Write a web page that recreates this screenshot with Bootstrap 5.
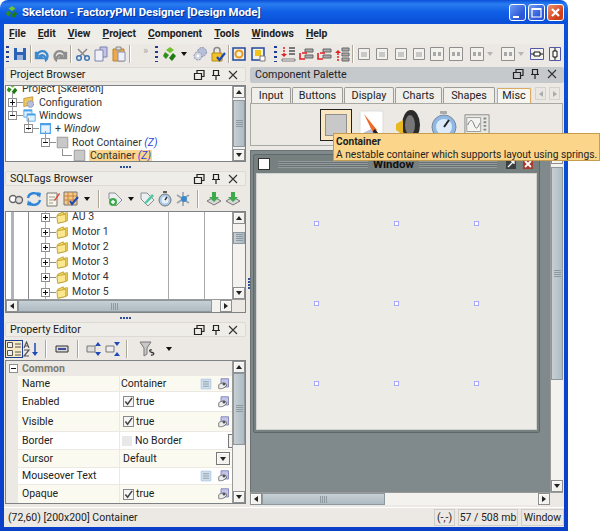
<!DOCTYPE html>
<html lang="en">
<head>
<meta charset="UTF-8">
<title>Skeleton - FactoryPMI Designer [Design Mode]</title>
<link href="https://cdn.jsdelivr.net/npm/bootstrap@5.3.0/dist/css/bootstrap.min.css" rel="stylesheet">
<style>
html,body{margin:0;height:531px;overflow:hidden;background:#fff}
body,.win{font:10.5px/1.1 Roboto,"Liberation Sans",Arial,sans-serif;color:#222}
.win{position:relative;width:568px;height:531px;padding:0 4px 4px;border-radius:8px 8px 0 0;background:linear-gradient(#0a4fd8 0,#2a7cf0 4px,#0f5fe6 12px,#0a50d8 22px,#0a3fc8 100%)}
.title{height:24px;color:#fff;font-weight:700;font-size:11.4px;text-shadow:1px 1px 0 #0a2f90}
.title .logo{margin:0 3px 0 1px;flex:none}
.wb{width:17px;height:17px;margin-left:2px;border:1px solid #fff;border-radius:3px;background:linear-gradient(135deg,#6f9cf4,#2a58d8 70%)}
.wb svg{display:block}
.wb.x{background:linear-gradient(135deg,#ee9070,#d2401a 70%)}
.inner{height:503px;background:#ece9e4}
.menu{height:20px;gap:12px;padding-left:5px;font-weight:700;font-size:10.4px;background:#efede8}
.tb{height:20px}
.ti{width:18px;height:16px;flex:none}
.grip{width:3px;height:16px;flex:none;background:repeating-linear-gradient(#1c3f94 0 2px,transparent 2px 5px)}
.sep{width:2px;height:18px;flex:none;border-left:1px solid #aca899;border-right:1px solid #fff}
.car{width:8px;flex:none;height:8px;display:flex;align-items:center;justify-content:center}
.car::after{content:"";border:3px solid transparent;border-top:4px solid #111;border-bottom:0}
.car.off::after{border-top-color:#b5b5b5}
.l1{margin-left:1px}.l2{margin-left:2px}.l3{margin-left:3px}.l4{margin-left:4px}.l5{margin-left:5px}.l6{margin-left:6px}.l7{margin-left:7px}.l9{margin-left:9px}.l10{margin-left:10px}
.more{width:18px;color:#aaa;font-size:11px;text-align:center;line-height:10px;margin-top:-6px}
.main{height:443px}
.left{width:243px;padding:3px 1px 0;flex:none}
.split{width:3px;background:#ece9e4}
.split-v{height:9px}
.dots{width:12px;height:2px;background:repeating-linear-gradient(90deg,#2a4f9c 0 2px,transparent 2px 3px)}
.dots-v{width:2px;height:12px;background:repeating-linear-gradient(#2a4f9c 0 2px,transparent 2px 3px);margin:214px 0 0 .5px}
.ph{height:15px;padding-left:4px;font-size:10.7px;border:1px solid #dcdad4;background:#efede8;border-radius:2px}
.ph svg{width:12px;height:12px;flex:none}
.ph .ctl{position:absolute;right:6px;top:1px;gap:5px}
.ph-a{background:#c5c9cc;height:16px;border:0;color:#222;padding-left:5px}
.sbox{border:1px solid #7f8284;background:#fff;overflow:hidden}
.tr{height:13.33px;white-space:nowrap;font-size:10.5px;color:#333}
.tr15{height:15px}
.tr .tg{width:15px;flex:none;position:relative;height:9px}
.tg::before{content:"";position:absolute;left:0;top:0;width:9px;height:9px;border:1px solid #8f8f8f;background:#fff}
.tg::after{content:"";position:absolute;left:9px;top:4px;width:6px;height:1px;background:#8f8f8f}
.tg i{position:absolute;left:2px;top:4px;width:5px;height:1px;background:#111;z-index:1}
.tg.p b{position:absolute;left:4px;top:2px;width:1px;height:5px;background:#111;z-index:1}
.ell{width:15px;height:13px;flex:none;position:relative}
.ell::after{content:"";position:absolute;left:4px;top:0;width:10px;height:7px;border-left:1px solid #8f8f8f;border-bottom:1px solid #8f8f8f}
.tr svg{width:13px;height:13px;flex:none}
.tr span{margin-left:3px}
.lv0{padding-left:0}.lv1{padding-left:2px}.lv2{padding-left:18px}.lv3{padding-left:35px}.lv4{padding-left:52px}
.z{color:#2b3fe0}
.hl{background:#fbd58c;padding:0 1px}
.pt{margin-top:-3.7px}
.tags{margin-top:-2.5px}
.vline{position:absolute;width:1px;background:#9a9a9a}
.pv1{left:6px;top:7px;height:22px}.pv2{left:22px;top:32px;height:12px}.pv3{left:39px;top:45px;height:12px}
.sv1{left:5px;top:0;bottom:0;width:3px;background:#aeb4b8}.sv2{left:22px;top:0;bottom:0;background:#888}
.sv3{left:39px;top:0;bottom:0;background:#aaa}.sv4{left:162px;top:0;bottom:0;background:#aaa}.sv5{left:198px;top:0;bottom:0;background:#aaa}
.vsb{width:13px;flex:none;background:#f3f2ee;border-left:1px solid #9a9a9a}
.sbtn{height:12px;flex:none;background:#f3f2ee;border:1px solid #8c8f90;box-shadow:inset 1px 1px 0 #fff;display:flex;align-items:center;justify-content:center}
.u::after{content:"";border:3px solid transparent;border-bottom:4px solid #222;border-top:0}
.d::after{content:"";border:3px solid transparent;border-top:4px solid #222;border-bottom:0}
.lf::after{content:"";border:3px solid transparent;border-right:4px solid #222;border-left:0}
.rt::after{content:"";border:3px solid transparent;border-left:4px solid #222;border-right:0}
.thumb{background:linear-gradient(90deg,#c6d0d5,#aebbc2);border:1px solid #8c989e;display:flex;align-items:center;justify-content:center}
.thumb::after{content:"";width:7px;height:8px;background:repeating-linear-gradient(#8e9aa0 0 1px,transparent 1px 2px)}
.thumb.h{background:linear-gradient(#c6d0d5,#aebbc2)}
.thumb.h::after{height:7px;width:8px;background:repeating-linear-gradient(90deg,#8e9aa0 0 1px,transparent 1px 2px)}
.hsb{height:13px;flex:none;background:#f3f2ee;border-top:1px solid #9a9a9a}
.hsb .sbtn{width:12px;height:12px}
.corner{width:13px;background:#ece9e4;flex:none}
.vt1{height:50px;margin:2px 0}
.vt1+.sbtn{margin-top:auto}
.vt2{height:12px;margin-top:8px}
.vt3{height:72px}
.vt4{height:213px;margin-top:3px}
.vt-btn{height:14px}
.ht1{width:194px}
.ht2{width:123px}
#projectTree{height:77px;margin-top:3px}
#tagTree{height:102px}
#props{height:144px}
.stb{height:25px;padding-left:2px}
.stb2{height:23px;padding-left:0}
.sel{width:18px;height:18px;border:1px solid #1c3f94;background:#f6e9c4;flex:none}
.sel svg{width:16px;height:16px;display:block}
.ti16{width:16px}
.prop{font-size:10.5px;background:#ece9e4}
.cmn{height:15px;color:#807c70;font-weight:700;padding-left:3px;gap:4px}
.cmn .tg{width:9px;height:9px;position:relative}
.cmn .tg::after{display:none}
.pr{padding-left:12px;margin-bottom:1px}
.pr>div:first-child{width:101px;padding-left:4px;margin-right:1px;flex:none}
.pr>div:last-child{flex-grow:1;padding-left:1px;position:relative}
.pr>div{background:#fff;height:100%}
.pr.c>div{background:#fbfaf1}
.h15{height:15px}.h19{height:19px}.h17{height:17px}.h16{height:16px}.h18{height:18px}
.pr svg.pi{position:absolute;width:12px;height:12px;top:50%;margin-top:-6px}
.pi1{right:20px}.pi2{right:2px}
.chk{width:11px;height:11px;border:1px solid #8a8a8a;background:#f5f5f5;margin:0 2px 0 2px;flex:none}
.chk svg{display:block;width:9px;height:9px}
.swatch{width:10px;height:10px;background:#e8e8e8;margin:0 3px 0 1px}
.pr>div.dft{padding-left:3px}
.combo{position:absolute;right:2px;top:2px;width:14px;height:13px;background:#f3f2ee;border:1px solid #777;box-shadow:inset 1px 1px 0 #fff;display:flex;align-items:center;justify-content:center}
.stub{position:absolute;right:0;top:2px;width:4px;height:14px;border:1px solid #777;border-right:0;background:#f3f2ee}
.right{width:314px;flex:none;padding-top:3px}
.tabs{height:20px;padding:4px 0 0 1px;margin-top:0;border:0;flex-wrap:nowrap;gap:1px}
.tabs .nav-link{height:17px;padding:0;text-align:center;font-size:10.8px;line-height:15px;color:#222;background:#f1efea;border:1px solid #9c9c98;border-bottom:0;border-radius:2px 2px 0 0;margin:0}
.tabs .nav-link.active{background:#f7f5f0;box-shadow:inset 0 0 0 1px #d9ab5e;color:#222}
.w40{width:40px}.w51{width:51px}.w50{width:50px}.w47{width:47px}.w52{width:52px}.w36{width:36px}
.tabnav{margin-left:2px;width:28px;height:15px;gap:3px}
.tabnav .dim{width:11px;height:13px;background:#e9e7e2;border:1px solid #d4d2cc;display:flex;align-items:center;justify-content:center}
.dim.lf::after{border-right-color:#aaa}.dim.rt::after{border-left-color:#aaa}
.palette{height:43px;border:1px solid #a9a9a4;background:#ece9e4;margin-right:1px}
.pal-sel{width:32px;height:32px;margin-left:69px;border:1px solid #222;background:#fbe7bf;padding:4px}
.pal-sel div{height:100%;background:#c8c8c8;border:1px solid #8f8f8f}
.pal{width:26px;height:32px;flex:none}
.work{height:355px;margin-top:4px;margin-right:1px}
.desk{background:#808a8c;border:1px solid #6a7274;border-width:1px 0 0 1px;padding:3px 0 0 2px;overflow:hidden}
.frame{width:287px;height:279px;background:#76807f;border:1px solid #5f6868;border-radius:2px;padding:0 2px}
.ftitle{height:18px;font-weight:700;font-size:11.5px;color:#111;padding:0 4px 0 2px}
.fico{width:12px;height:12px;background:#fff;border:1px solid #333;flex:none}
.strp{height:7px;flex:none;background:repeating-linear-gradient(#929a9c 0 1px,#6a7274 1px 2px)}
.strp.sl{width:90px}
.strp.sr{width:78px;margin-right:5px}
.fbtn{width:10px;height:10px;flex:none}
.canvas{height:257px;background:#ecebe6;border:1px solid #cfd2d0;padding-top:9px;display:grid;grid-template-columns:repeat(3,80px);grid-template-rows:repeat(3,80px);place-items:center;justify-content:center}
.hd{width:5px;height:5px;background:#fff;border:1px solid #a8a8ff}
.status{height:20px;padding-left:4px;font-size:10.5px;border-top:1px solid #fff;background:#ece9e4;white-space:nowrap}
.sc{height:17px;border:1px solid #cfcdc7;padding:0 1px;margin-left:3px;justify-content:center}
.s1{width:21px}.s2{width:60px}.s3{width:43px}
.tip{position:absolute;left:333px;top:133px;width:267px;height:28px;background:#fbd58a;border:1px solid #c69c4f;padding:1px 2px;white-space:nowrap;font-size:10.2px;line-height:13px;z-index:5;color:#222}
</style>
</head>
<body>
<svg width="0" height="0" class="position-absolute">
<defs>
<symbol id="cubes" viewBox="0 0 16 16"><path d="M8 1l4 3-4 3-4-3z" fill="#6cc32c"/><path d="M3 6l4 3-3 4-3-3z" fill="#2f8f1a"/><path d="M11 7l3 3-4 5-3-3z" fill="#1f7a14"/></symbol>
<symbol id="save" viewBox="0 0 16 16"><path d="M2 2h12v12H2z" fill="#2a63b8"/><path d="M5 2h6v4H5z" fill="#dfe7f2"/><path d="M5 9h6v5H5z" fill="#9bb8dc"/></symbol>
<symbol id="undo" viewBox="0 0 16 16"><path d="M3 11c0-6 7-8 10-3 1 2 0 5-1 6-1-4-3-6-6-4l2 2H2V6l1 2" fill="none" stroke="#3c88cf" stroke-width="2.4"/></symbol>
<symbol id="redo" viewBox="0 0 16 16"><path d="M13 11c0-6-7-8-10-3-1 2 0 5 1 6 1-4 3-6 6-4l-2 2h6V6l-1 2" fill="none" stroke="#8d8d8d" stroke-width="2.4"/></symbol>
<symbol id="cut" viewBox="0 0 16 16"><path d="M3 3l8 8M12 3L5 10" stroke="#8c8c8c" stroke-width="1.6"/><circle cx="4" cy="12" r="2.3" fill="none" stroke="#3b76b8" stroke-width="1.5"/><circle cx="12" cy="12" r="2.3" fill="none" stroke="#3b76b8" stroke-width="1.5"/></symbol>
<symbol id="copy" viewBox="0 0 16 16"><path d="M7 1h7v10H7z" fill="#c2c4e8" stroke="#7c7fae"/><path d="M2 4h8v11H2z" fill="#f0f1f8" stroke="#7c86ae"/></symbol>
<symbol id="paste" viewBox="0 0 16 16"><path d="M2 3h11v12H2z" fill="#eea94e" stroke="#b8812f"/><path d="M5 1h5v3H5z" fill="#ddd" stroke="#888"/><path d="M7 6h7v9H7z" fill="#eef0f8" stroke="#8a90b0"/></symbol>
<symbol id="gears" viewBox="0 0 16 16"><circle cx="10" cy="6" r="4.5" fill="#b8bfd8" stroke="#8a90ac" stroke-dasharray="2 1"/><circle cx="6" cy="10" r="4" fill="#cfd3e2" stroke="#8a90ac" stroke-dasharray="2 1"/><circle cx="6" cy="10" r="1.4" fill="#fff"/></symbol>
<symbol id="lock" viewBox="0 0 16 16"><path d="M4 7V4.500a3 3 0 0 1 6 0V7" fill="none" stroke="#888" stroke-width="1.5"/><path d="M2 7h10v8H2z" fill="#f2c22e" stroke="#b98d12"/><path d="M7 11l2.500 3L15 7" fill="none" stroke="#1f48b8" stroke-width="2.200"/></symbol>
<symbol id="fr1" viewBox="0 0 16 16"><path d="M2 2h12v12H2z" fill="#f3f0e4" stroke="#23489c" stroke-width="1.500"/><circle cx="8" cy="8" r="3.500" fill="none" stroke="#e89a1c" stroke-width="2"/></symbol>
<symbol id="fr2" viewBox="0 0 16 16"><path d="M2 2h12v12H2z" fill="#f3f0e4" stroke="#23489c" stroke-width="1.500"/><path d="M5 4h6v6H5z" fill="#f0c419"/><path d="M10 10h5v5h-5z" fill="#fff" stroke="#777"/></symbol>
<symbol id="a1" viewBox="0 0 16 16"><path d="M9 2h6M9 5h6M9 8h6" stroke="#777" stroke-width="2"/><path d="M4 1v9" stroke="#e02020" stroke-width="1.500" stroke-dasharray="2 1"/><path d="M1 8h6l-3 3z" fill="#e02020"/><path d="M2 13h13v2H2z" fill="#fff" stroke="#777"/></symbol>
<symbol id="a2" viewBox="0 0 16 16"><path d="M7 3h8v3H7zM7 9h8v3H7z" fill="#aaa" stroke="#666"/><path d="M2 7v6h5M9 7H4" fill="none" stroke="#e02020" stroke-width="1.600"/></symbol>
<symbol id="a4" viewBox="0 0 16 16"><path d="M8 2h7v3H8zM8 7h7v3H8zM8 12h7v3H8z" fill="#aaa" stroke="#666"/><path d="M4 15V6" stroke="#e02020" stroke-width="1.500" stroke-dasharray="2 1"/><path d="M1 7l3-3 3 3z" fill="#e02020"/></symbol>
<symbol id="b" viewBox="0 0 16 16"><path d="M2.500 2.500h11v11h-11z" fill="#f2f1ec" stroke="#8f8f8f"/><path d="M5 6h6v5H5z" fill="#c8c8c8"/></symbol>
<symbol id="b2" viewBox="0 0 16 16"><path d="M1.500 1.500h13v13h-13z" fill="#f2f1ec" stroke="#8f8f8f"/><path d="M4 6h3v4H4zM9 6h3v4H9z" fill="#a8a8a8"/></symbol>
<symbol id="h1" viewBox="0 0 16 16"><path d="M1.500 2.500h13v11h-13z" fill="#f2f1ec" stroke="#5458a8"/><path d="M2 8h12" stroke="#111"/><path d="M5 6h6v4H5z" fill="#fff" stroke="#111"/></symbol>
<symbol id="h2" viewBox="0 0 16 16"><path d="M2.500 1.500h11v13h-11z" fill="#f2f1ec" stroke="#5458a8"/><path d="M8 2v12" stroke="#111"/><path d="M6 5h4v6H6z" fill="#fff" stroke="#111"/></symbol>
<symbol id="cfg" viewBox="0 0 16 16"><path d="M1 3l11-2v9L1 13z" fill="#f0c860" stroke="#b88f30"/><circle cx="9" cy="10" r="4" fill="#b8bfd8" stroke="#777fa0" stroke-dasharray="2 1"/></symbol>
<symbol id="wins" viewBox="0 0 16 16"><path d="M1 1h10v9H1z" fill="#dff0ff" stroke="#4aa0e8"/><path d="M1 1h10v2H1z" fill="#4aa0e8"/><path d="M5 6h10v9H5z" fill="#dff0ff" stroke="#4aa0e8"/><path d="M5 6h10v2H5z" fill="#4aa0e8"/></symbol>
<symbol id="win" viewBox="0 0 16 16"><path d="M2 2h12v12H2z" fill="#e6f2ff" stroke="#4aa0e8" stroke-width="1.400"/><path d="M2 2h12v2H2z" fill="#4aa0e8"/></symbol>
<symbol id="cont" viewBox="0 0 16 16"><path d="M1.500 1.500h13v13h-13z" fill="#c8c8c8" stroke="#8f8f8f"/></symbol>
<symbol id="folder" viewBox="0 0 16 16"><path d="M2 4l7-3v2l5-1v10l-11 3z" fill="#f6d864" stroke="#b59a2c"/><path d="M1 6l11-2v9L2 15z" fill="#fbe78e" stroke="#b59a2c"/></symbol>
<symbol id="eye" viewBox="0 0 16 16"><circle cx="5" cy="8" r="3.500" fill="#fff" stroke="#666" stroke-width="1.400"/><circle cx="11" cy="9" r="3.500" fill="#ddd" stroke="#666" stroke-width="1.400"/></symbol>
<symbol id="ref" viewBox="0 0 16 16"><path d="M2 7a6 6 0 0 1 11-2M14 9a6 6 0 0 1-11 2" fill="none" stroke="#2f86d8" stroke-width="2.400"/><path d="M11 1l4 1-1 5zM5 15l-4-1 1-5z" fill="#2f86d8"/></symbol>
<symbol id="note" viewBox="0 0 16 16"><path d="M2 2h10v13H2z" fill="#f6f6e8" stroke="#777"/><path d="M4 6h6M4 9h6M4 12h4" stroke="#999"/><path d="M9 9l5-7 1 1-5 7z" fill="#e04a30"/></symbol>
<symbol id="tbl" viewBox="0 0 16 16"><path d="M1 1h13v13H1z" fill="#f2c98a" stroke="#777"/><path d="M1 5h13M1 9h13M5 1v13M10 1v13" stroke="#c8823a"/><path d="M7 10l2 3 6-7" fill="none" stroke="#1f48b8" stroke-width="2"/></symbol>
<symbol id="tag" viewBox="0 0 16 16"><path d="M2 2h6l7 7-6 6-7-7z" fill="#eceff2" stroke="#8a8f96"/><circle cx="6" cy="11" r="4" fill="#3faa4c"/><path d="M4 11h4M6 9v4" stroke="#fff" stroke-width="1.400"/></symbol>
<symbol id="tag2" viewBox="0 0 16 16"><path d="M2 2h6l7 7-6 6-7-7z" fill="#eceff2" stroke="#8a8f96"/><path d="M5 12l8-9 2 2-8 8z" fill="#52c8a0"/></symbol>
<symbol id="clock" viewBox="0 0 16 16"><circle cx="8" cy="9" r="6" fill="#a8c8e8" stroke="#777"/><circle cx="8" cy="9" r="3.500" fill="#e8f0f8"/><path d="M8 9l2-3M6 1h4" stroke="#333" stroke-width="1.400"/></symbol>
<symbol id="star" viewBox="0 0 16 16"><path d="M8 1v14M2 4l12 8M14 4L2 12" stroke="#9aa2aa" stroke-width="1.600"/><circle cx="9" cy="8" r="3" fill="#3c88cf"/></symbol>
<symbol id="dl" viewBox="0 0 16 16"><path d="M1 10l7-4 7 4-7 4z" fill="#d8d8d8" stroke="#777"/><path d="M6 1h4v5h3l-5 5-5-5h3z" fill="#3faa4c"/></symbol>
<symbol id="cat" viewBox="0 0 16 16"><path d="M1.500 1.500h5v5h-5zM1.500 9.500h5v5h-5zM9 3h6M9 6h6M9 11h6M9 14h6" fill="#eee" stroke="#555"/></symbol>
<symbol id="az" viewBox="0 0 16 16"><path d="M12 2v11" stroke="#1f48b8" stroke-width="1.500"/><path d="M9 11h6l-3 4z" fill="#1f48b8"/><path d="M1 7l2.500-6L6 7M2 5h3M1 9h5L1 15h5" fill="none" stroke="#555" stroke-width="1.200"/></symbol>
<symbol id="fld" viewBox="0 0 16 16"><path d="M2 5h12v6H2z" fill="#d8d8d8" stroke="#333"/><path d="M4 7h8v2H4z" fill="#3e4a9a"/></symbol>
<symbol id="exp" viewBox="0 0 16 16"><path d="M1 5h8v6H1z" fill="#ddd" stroke="#777"/><path d="M12 1l-3 4h6zM12 15l-3-4h6z" fill="#1f48b8"/></symbol>
<symbol id="col" viewBox="0 0 16 16"><path d="M1 5h8v6H1z" fill="#eee" stroke="#777"/><path d="M12 5L9 1h6zM12 11l-3 4h6z" fill="#1f48b8"/></symbol>
<symbol id="funnel" viewBox="0 0 16 16"><path d="M1 1h11L8 7v6L5 15V7z" fill="#c8c8c8" stroke="#777"/><path d="M13 9c-3-1-3 2 0 2.500s2 3-1 2.500" fill="none" stroke="#333" stroke-width="1.300"/></symbol>
<symbol id="vals" viewBox="0 0 16 16"><path d="M1.500 1.500h13v13h-13z" fill="#cddff0" stroke="#a8c4de"/><path d="M4 5h8M4 8h8M4 11h8" stroke="#8a8a8a"/></symbol>
<symbol id="bind" viewBox="0 0 16 16"><path d="M4 1h10v11H4z" fill="#c2c4e8" stroke="#6e72ac"/><path d="M1 9c4-3 8-3 11 0-3 5-8 6-11 5z" fill="#eee" stroke="#555"/><circle cx="8" cy="8" r="2" fill="#555"/></symbol>
<symbol id="check" viewBox="0 0 10 10"><path d="M1.500 5l2.500 3 5-7" fill="none" stroke="#444" stroke-width="1.700"/></symbol>
<symbol id="restore" viewBox="0 0 12 12"><path d="M1.500 4.500h7v6h-7zM4 4V1.500h7v6H9" fill="none" stroke="#222" stroke-width="1.200"/></symbol>
<symbol id="pin" viewBox="0 0 12 12"><path d="M3.500 1.500h5v5h-5zM2 6.500h8M6 7v4" fill="none" stroke="#222" stroke-width="1.200"/></symbol>
<symbol id="close" viewBox="0 0 12 12"><path d="M2 2l8 8M10 2l-8 8" stroke="#333" stroke-width="1.100"/></symbol>
</defs>
</svg>

<div class="win d-flex flex-column">
  <div class="title d-flex align-items-center">
    <svg class="logo" width="14" height="14"><use href="#cubes"/></svg>
    <div class="flex-grow-1">Skeleton - FactoryPMI Designer [Design Mode]</div>
    <div class="d-flex">
      <div class="wb"><svg width="15" height="15"><path d="M3 11h6v2H3z" fill="#fff"/></svg></div>
      <div class="wb"><svg width="15" height="15"><path d="M3 3.500h9v8.500H3z" fill="none" stroke="#fff" stroke-width="1.200"/><path d="M3 3h9v2H3z" fill="#fff"/></svg></div>
      <div class="wb x"><svg width="15" height="15"><path d="M4 4l7 7M11 4l-7 7" stroke="#fff" stroke-width="2.200"/></svg></div>
    </div>
  </div>

  <div class="inner d-flex flex-column">
    <div class="menu d-flex align-items-center">
      <span><u>F</u>ile</span><span><u>E</u>dit</span><span><u>V</u>iew</span><span><u>P</u>roject</span><span><u>C</u>omponent</span><span><u>T</u>ools</span><span><u>W</u>indows</span><span><u>H</u>elp</span>
    </div>
    <div class="tb d-flex align-items-center">
      <div class="grip l2"></div>
      <svg class="ti l2"><use href="#save"/></svg><div class="sep l1"></div>
      <svg class="ti l1"><use href="#undo"/></svg><svg class="ti"><use href="#redo"/></svg><div class="sep l1"></div>
      <svg class="ti l2"><use href="#cut"/></svg><svg class="ti"><use href="#copy"/></svg><svg class="ti"><use href="#paste"/></svg><div class="sep l1"></div>
      <div class="more l6">»</div><div class="grip l1"></div>
      <svg class="ti l3"><use href="#cubes"/></svg><div class="car l1"></div>
      <svg class="ti l3"><use href="#gears"/></svg><svg class="ti"><use href="#lock"/></svg><div class="sep l1"></div>
      <svg class="ti"><use href="#fr1"/></svg><svg class="ti l1"><use href="#fr2"/></svg><div class="grip l7"></div>
      <svg class="ti l2"><use href="#a1"/></svg><svg class="ti"><use href="#a2"/></svg><svg class="ti"><use href="#a2"/></svg><svg class="ti"><use href="#a4"/></svg><div class="sep l1"></div>
      <svg class="ti l1"><use href="#b"/></svg><svg class="ti"><use href="#b"/></svg><svg class="ti l1"><use href="#b"/></svg><svg class="ti"><use href="#b"/></svg><svg class="ti"><use href="#b2"/></svg><svg class="ti l1"><use href="#b2"/></svg>
      <svg class="ti l3"><use href="#b2"/></svg><div class="car off"></div>
      <svg class="ti l5"><use href="#b2"/></svg><div class="car off"></div>
      <svg class="ti l3"><use href="#h1"/></svg><svg class="ti"><use href="#h2"/></svg>
    </div>

    <div class="main d-flex">
      <div class="left d-flex flex-column">
        <div class="ph d-flex align-items-center position-relative">Project Browser
          <div class="ctl d-flex"><svg><use href="#restore"/></svg><svg><use href="#pin"/></svg><svg><use href="#close"/></svg></div>
        </div>
        <div class="sbox d-flex position-relative" id="projectTree">
          <div class="flex-grow-1 position-relative overflow-hidden">
            <div class="pt">
              <div class="tr d-flex align-items-center lv0"><svg><use href="#cubes"/></svg><span>Project [Skeleton]</span></div>
              <div class="tr d-flex align-items-center lv1"><div class="tg p"><i></i><b></b></div><svg><use href="#cfg"/></svg><span>Configuration</span></div>
              <div class="tr d-flex align-items-center lv1"><div class="tg"><i></i></div><svg><use href="#wins"/></svg><span>Windows</span></div>
              <div class="tr d-flex align-items-center lv2"><div class="tg"><i></i></div><svg><use href="#win"/></svg><span>+ <em>Window</em></span></div>
              <div class="tr d-flex align-items-center lv3"><div class="tg"><i></i></div><svg><use href="#cont"/></svg><span>Root Container <em class="z">(Z)</em></span></div>
              <div class="tr d-flex align-items-center lv4"><div class="ell"></div><svg><use href="#cont"/></svg><span class="hl">Container <em class="z">(Z)</em></span></div>
            </div>
            <div class="vline pv1"></div><div class="vline pv2"></div><div class="vline pv3"></div>
          </div>
          <div class="vsb d-flex flex-column">
            <div class="sbtn u"></div><div class="thumb vt1"></div><div class="sbtn d"></div>
          </div>
        </div>
        <div class="split-v d-flex justify-content-center align-items-center"><div class="dots"></div></div>
        <div class="ph d-flex align-items-center position-relative">SQLTags Browser
          <div class="ctl d-flex"><svg><use href="#restore"/></svg><svg><use href="#pin"/></svg><svg><use href="#close"/></svg></div>
        </div>
        <div class="stb d-flex align-items-center">
          <svg class="ti"><use href="#eye"/></svg><svg class="ti"><use href="#ref"/></svg><svg class="ti l1"><use href="#note"/></svg><svg class="ti"><use href="#tbl"/></svg><div class="car l3"></div>
          <div class="sep l7"></div>
          <svg class="ti l6"><use href="#tag"/></svg><div class="car l3"></div>
          <svg class="ti l3"><use href="#tag2"/></svg><svg class="ti"><use href="#clock"/></svg><svg class="ti"><use href="#star"/></svg><div class="sep l5"></div>
          <svg class="ti l6"><use href="#dl"/></svg><svg class="ti l1"><use href="#dl"/></svg>
        </div>
        <div class="sbox d-flex flex-column" id="tagTree">
          <div class="d-flex flex-grow-1 overflow-hidden">
            <div class="flex-grow-1 position-relative overflow-hidden">
              <div class="vline sv1"></div><div class="vline sv2"></div><div class="vline sv3"></div><div class="vline sv4"></div><div class="vline sv5"></div>
              <div class="tags position-relative">
                <div class="tr tr15 d-flex align-items-center lv3"><div class="tg p"><i></i><b></b></div><svg><use href="#folder"/></svg><span>AU 3</span></div>
                <div class="tr tr15 d-flex align-items-center lv3"><div class="tg p"><i></i><b></b></div><svg><use href="#folder"/></svg><span>Motor 1</span></div>
                <div class="tr tr15 d-flex align-items-center lv3"><div class="tg p"><i></i><b></b></div><svg><use href="#folder"/></svg><span>Motor 2</span></div>
                <div class="tr tr15 d-flex align-items-center lv3"><div class="tg p"><i></i><b></b></div><svg><use href="#folder"/></svg><span>Motor 3</span></div>
                <div class="tr tr15 d-flex align-items-center lv3"><div class="tg p"><i></i><b></b></div><svg><use href="#folder"/></svg><span>Motor 4</span></div>
                <div class="tr tr15 d-flex align-items-center lv3"><div class="tg p"><i></i><b></b></div><svg><use href="#folder"/></svg><span>Motor 5</span></div>
              </div>
            </div>
            <div class="vsb d-flex flex-column">
              <div class="sbtn u"></div><div class="thumb vt2"></div><div class="flex-grow-1"></div><div class="sbtn d"></div>
            </div>
          </div>
          <div class="hsb d-flex">
            <div class="sbtn lf"></div><div class="thumb h ht1"></div><div class="flex-grow-1"></div><div class="sbtn rt"></div><div class="corner"></div>
          </div>
        </div>
        <div class="split-v d-flex justify-content-center align-items-center"><div class="dots"></div></div>
        <div class="ph d-flex align-items-center position-relative">Property Editor
          <div class="ctl d-flex"><svg><use href="#restore"/></svg><svg><use href="#pin"/></svg><svg><use href="#close"/></svg></div>
        </div>
        <div class="stb stb2 d-flex align-items-center">
          <div class="sel"><svg><use href="#cat"/></svg></div><svg class="ti ti16"><use href="#az"/></svg>
          <div class="sep l6"></div>
          <svg class="ti l6"><use href="#fld"/></svg><div class="sep l6"></div>
          <svg class="ti l6"><use href="#exp"/></svg><svg class="ti l1"><use href="#col"/></svg><div class="sep l4"></div>
          <svg class="ti l10"><use href="#funnel"/></svg><div class="car l9"></div>
        </div>
        <div class="sbox prop d-flex" id="props">
          <div class="flex-grow-1">
            <div class="cmn d-flex align-items-center"><div class="tg"><i></i></div>Common</div>
            <div class="pr c h15 d-flex"><div class="d-flex align-items-center">Name</div><div class="d-flex align-items-center">Container<svg class="pi pi1"><use href="#vals"/></svg><svg class="pi pi2"><use href="#bind"/></svg></div></div>
            <div class="pr h19 d-flex"><div class="d-flex align-items-center">Enabled</div><div class="d-flex align-items-center"><div class="chk"><svg><use href="#check"/></svg></div>true<svg class="pi pi2"><use href="#bind"/></svg></div></div>
            <div class="pr c h19 d-flex"><div class="d-flex align-items-center">Visible</div><div class="d-flex align-items-center"><div class="chk"><svg><use href="#check"/></svg></div>true<svg class="pi pi2"><use href="#bind"/></svg></div></div>
            <div class="pr h17 d-flex"><div class="d-flex align-items-center">Border</div><div class="d-flex align-items-center"><div class="swatch"></div>No Border<div class="stub"></div></div></div>
            <div class="pr c h17 d-flex"><div class="d-flex align-items-center">Cursor</div><div class="d-flex align-items-center dft">Default<div class="combo d"></div></div></div>
            <div class="pr h16 d-flex"><div class="d-flex align-items-center">Mouseover Text</div><div class="d-flex align-items-center"><svg class="pi pi1"><use href="#vals"/></svg><svg class="pi pi2"><use href="#bind"/></svg></div></div>
            <div class="pr c h18 d-flex"><div class="d-flex align-items-center">Opaque</div><div class="d-flex align-items-center"><div class="chk"><svg><use href="#check"/></svg></div>true<svg class="pi pi2"><use href="#bind"/></svg></div></div>
          </div>
          <div class="vsb d-flex flex-column">
            <div class="sbtn u"></div><div class="thumb vt3"></div><div class="flex-grow-1"></div><div class="sbtn d"></div>
          </div>
        </div>
      </div>
      <div class="split"><div class="dots-v"></div></div>
      <div class="right d-flex flex-column">
        <div class="ph ph-a d-flex align-items-center position-relative">Component Palette
          <div class="ctl d-flex"><svg><use href="#restore"/></svg><svg><use href="#pin"/></svg><svg><use href="#close"/></svg></div>
        </div>
        <ul class="nav nav-tabs tabs">
          <li class="nav-item"><a class="nav-link w40" href="#">Input</a></li>
          <li class="nav-item"><a class="nav-link w51" href="#">Buttons</a></li>
          <li class="nav-item"><a class="nav-link w50" href="#">Display</a></li>
          <li class="nav-item"><a class="nav-link w47" href="#">Charts</a></li>
          <li class="nav-item"><a class="nav-link w52" href="#">Shapes</a></li>
          <li class="nav-item"><a class="nav-link active w36" href="#">Misc</a></li>
          <li class="tabnav d-flex"><div class="dim lf"></div><div class="dim rt"></div></li>
        </ul>
        <div class="palette d-flex align-items-center">
          <div class="pal-sel"><div></div></div>
          <svg class="pal l7" viewBox="0 0 26 32"><path d="M1 2h23v28H1z" fill="#fff" stroke="#ddd"/><path d="M5 5l13 16-4 3z" fill="#ef6a28"/><path d="M16 20l7 9-3 2-7-8z" fill="#222"/><path d="M4 24l8-4 4 6-5 4z" fill="#b8bfe0"/></svg>
          <svg class="pal l10" viewBox="0 0 26 32"><ellipse cx="16" cy="16" rx="9" ry="15" fill="#2b2b2b"/><ellipse cx="15" cy="16" rx="5" ry="10" fill="#777"/><path d="M8 11L1 15v6l7 5z" fill="#e8b820"/></svg>
          <svg class="pal l10" viewBox="0 0 26 32"><path d="M9 2h7v3H9z" fill="#aaa"/><circle cx="13" cy="18" r="12" fill="#8fb8e4" stroke="#7a8a9a"/><circle cx="13" cy="18" r="8" fill="#dceafa"/><path d="M13 18l5-7" stroke="#222" stroke-width="2"/></svg>
          <svg class="pal l7" viewBox="0 0 28 32"><path d="M1 5h26v21H1z" fill="#e8e8e4" stroke="#888"/><path d="M3 8h15v15H3z" fill="#f4f4f0" stroke="#999"/><path d="M4 16c3-7 5-6 7 0s4 3 6-2" fill="none" stroke="#777"/><path d="M21 8h3v2h-3zM21 12h3v2h-3zM21 16h3v2h-3zM21 20h3v2h-3z" fill="#888"/></svg>
        </div>
        <div class="work d-flex flex-column">
          <div class="d-flex flex-grow-1 overflow-hidden">
            <div class="desk flex-grow-1">
              <div class="frame">
                <div class="ftitle d-flex align-items-center gap-1">
                  <div class="fico me-1"></div><div class="strp sl"></div><span class="flex-grow-1 text-center">Window</span><div class="strp sr"></div>
                  <svg class="fbtn" viewBox="0 0 10 10"><rect width="10" height="10" fill="#3b3f40"/><path d="M2 8l6-6M5 2h3v3" stroke="#fff" stroke-width="1.300" fill="none"/></svg>
                  <svg class="fbtn l3" viewBox="0 0 10 10"><rect width="10" height="10" fill="#a83a2c"/><path d="M2 2l6 6M8 2L2 8" stroke="#fff" stroke-width="1.800"/></svg>
                </div>
                <div class="canvas">
                  <div class="hd"></div><div class="hd"></div><div class="hd"></div>
                  <div class="hd"></div><div class="hd"></div><div class="hd"></div>
                  <div class="hd"></div><div class="hd"></div><div class="hd"></div>
                </div>
              </div>
            </div>
            <div class="vsb d-flex flex-column">
              <div class="sbtn u vt-btn"></div><div class="thumb vt4"></div><div class="flex-grow-1"></div><div class="sbtn d"></div>
            </div>
          </div>
          <div class="hsb d-flex">
            <div class="sbtn lf"></div><div class="thumb h ht2"></div><div class="flex-grow-1"></div><div class="sbtn rt"></div><div class="corner"></div>
          </div>
        </div>
      </div>
    </div>

    <div class="status d-flex align-items-center">
      <div class="flex-grow-1">(72,60) [200x200] Container</div>
      <div class="sc s1 d-flex align-items-center">(-,-)</div>
      <div class="sc s2 d-flex align-items-center">57 / 508 mb</div>
      <div class="sc s3 d-flex align-items-center">Window</div>
    </div>
  </div>

  <div class="tip"><strong>Container</strong><br>A nestable container which supports layout using springs.</div>
</div>
</body>
</html>
